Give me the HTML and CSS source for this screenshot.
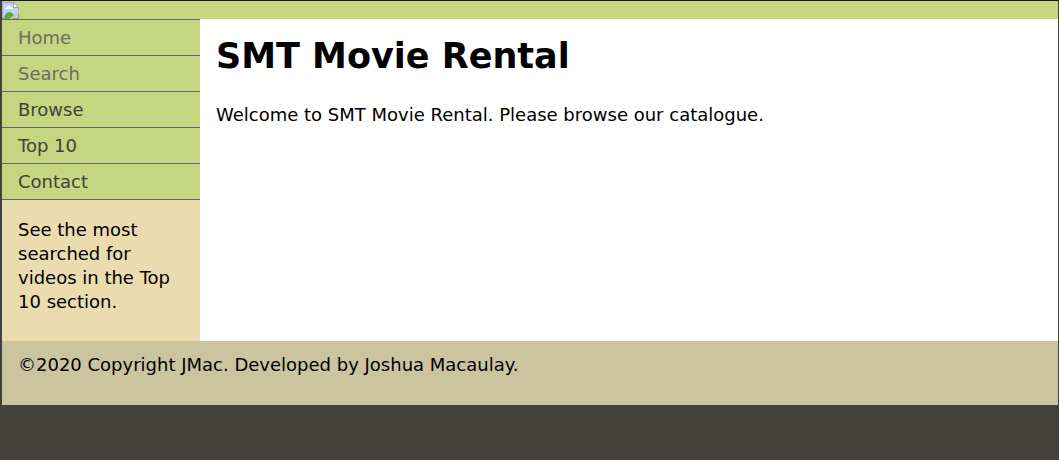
FILE: index.html
```html
<!DOCTYPE html>
<html lang="en">
<head>
<meta charset="utf-8">
<title>SMT Movie Rental</title>
<link rel="stylesheet" href="styles.css">
</head>
<body>
<div class="container">
<header class="header">
<svg class="logo" viewBox="0 0 18 18" role="img" aria-label="Logo"><path d="M1 1h10l6 5v4L7 18H1z" fill="#bfd3f2"/><path d="M2 17q1-5 5-6 3 0 5 3l-5 4H2z" fill="#56ab3c"/><path d="M3 8q0-2 2-2 2-3 4 0 2 0 2 2z" fill="#fff"/><path d="M.5 18V1.500h11l5 5V10" fill="none" stroke="#a4acba"/><path d="M11.500 1.500v5h5z" fill="#fff" stroke="#a0a2aa"/><path d="M11 18l6-5v5z" fill="#bfd3f2"/><path d="M16.500 13v4.500H11M.5 17.500H7" fill="none" stroke="#8e929c"/></svg>
</header>
<div class="content">
<aside class="sidebar">
<nav class="nav">
<a class="link visited" href="#">Home</a>
<a class="link visited" href="#">Search</a>
<a class="link" href="#">Browse</a>
<a class="link" href="#">Top 10</a>
<a class="link" href="#">Contact</a>
</nav>
<p class="note">See the most searched for videos in the Top 10 section.</p>
</aside>
<main class="main">
<h1 class="title">SMT Movie Rental</h1>
<p class="welcome">Welcome to SMT Movie Rental. Please browse our catalogue.</p>
</main>
</div>
<footer class="footer"><p class="copyright">©2020 Copyright JMac. Developed by Joshua Macaulay.</p></footer>
</div>
</body>
</html>
```
FILE: styles.css
```css
body {
  margin: 0;
  border-top: 1px solid #1c141c;
  background: #42413c;
  color: #000;
  font: 18px/24px Verdana, "DejaVu Sans", sans-serif;
}
.container {
  margin: 0 1px 0 2px;
  background: #fff;
}
.header {
  background: #c6d580;
}
.logo {
  display: block;
  width: 18px;
  height: 18px;
}
.content {
  display: flex;
}
.sidebar {
  flex: 0 0 198px;
  background: #eadcae;
}
.nav {
  border-top: 1px solid #666;
}
.link {
  display: block;
  padding: 6px 16px 5px;
  border-bottom: 1px solid #666;
  background: #c6d580;
  color: #42413c;
  text-decoration: none;
}
.visited {
  color: #6e6c64;
}
.note {
  margin: 0;
  padding: 18px 16px 27px;
}
.main {
  flex: 1;
  padding: 16px;
}
.title {
  margin: 0;
  font-size: 35px;
  line-height: 42px;
}
.welcome {
  margin: 26px 0 0;
}
.footer {
  background: #ccc49f;
}
.copyright {
  margin: 0;
  padding: 12px 16px 28px;
}
```
